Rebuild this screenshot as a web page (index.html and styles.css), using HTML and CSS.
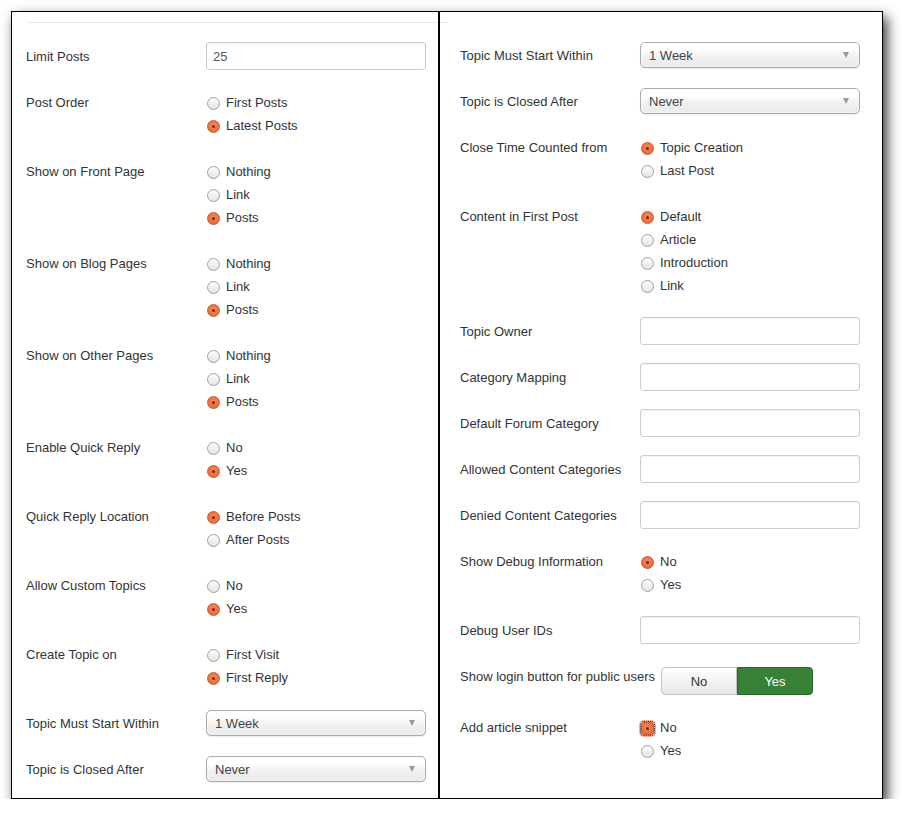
FILE: index.html
```html
<!DOCTYPE html>
<html>
<head>
<meta charset="utf-8">
<link rel="stylesheet" href="styles.css">
</head>
<body>
<div class="frame">
  <div class="panel left">
    <div class="rule"></div>
    <div class="group">
      <div class="label">Limit Posts</div>
      <div class="controls"><div class="input">25</div></div>
    </div>
    <div class="group">
      <div class="label">Post Order</div>
      <div class="controls radios">
        <div class="radio"><span class="dot"></span>First Posts</div>
        <div class="radio"><span class="dot on"></span>Latest Posts</div>
      </div>
    </div>
    <div class="group">
      <div class="label">Show on Front Page</div>
      <div class="controls radios">
        <div class="radio"><span class="dot"></span>Nothing</div>
        <div class="radio"><span class="dot"></span>Link</div>
        <div class="radio"><span class="dot on"></span>Posts</div>
      </div>
    </div>
    <div class="group">
      <div class="label">Show on Blog Pages</div>
      <div class="controls radios">
        <div class="radio"><span class="dot"></span>Nothing</div>
        <div class="radio"><span class="dot"></span>Link</div>
        <div class="radio"><span class="dot on"></span>Posts</div>
      </div>
    </div>
    <div class="group">
      <div class="label">Show on Other Pages</div>
      <div class="controls radios">
        <div class="radio"><span class="dot"></span>Nothing</div>
        <div class="radio"><span class="dot"></span>Link</div>
        <div class="radio"><span class="dot on"></span>Posts</div>
      </div>
    </div>
    <div class="group">
      <div class="label">Enable Quick Reply</div>
      <div class="controls radios">
        <div class="radio"><span class="dot"></span>No</div>
        <div class="radio"><span class="dot on"></span>Yes</div>
      </div>
    </div>
    <div class="group">
      <div class="label">Quick Reply Location</div>
      <div class="controls radios">
        <div class="radio"><span class="dot on"></span>Before Posts</div>
        <div class="radio"><span class="dot"></span>After Posts</div>
      </div>
    </div>
    <div class="group">
      <div class="label">Allow Custom Topics</div>
      <div class="controls radios">
        <div class="radio"><span class="dot"></span>No</div>
        <div class="radio"><span class="dot on"></span>Yes</div>
      </div>
    </div>
    <div class="group">
      <div class="label">Create Topic on</div>
      <div class="controls radios">
        <div class="radio"><span class="dot"></span>First Visit</div>
        <div class="radio"><span class="dot on"></span>First Reply</div>
      </div>
    </div>
    <div class="group">
      <div class="label">Topic Must Start Within</div>
      <div class="controls sel"><div class="select">1 Week<span class="caret"></span></div></div>
    </div>
    <div class="group last">
      <div class="label">Topic is Closed After</div>
      <div class="controls sel"><div class="select">Never<span class="caret"></span></div></div>
    </div>
  </div>
  <div class="panel right">
    <div class="rule stub"></div>
    <div class="group">
      <div class="label">Topic Must Start Within</div>
      <div class="controls sel"><div class="select">1 Week<span class="caret"></span></div></div>
    </div>
    <div class="group">
      <div class="label">Topic is Closed After</div>
      <div class="controls sel"><div class="select">Never<span class="caret"></span></div></div>
    </div>
    <div class="group">
      <div class="label">Close Time Counted from</div>
      <div class="controls radios">
        <div class="radio"><span class="dot on"></span>Topic Creation</div>
        <div class="radio"><span class="dot"></span>Last Post</div>
      </div>
    </div>
    <div class="group">
      <div class="label">Content in First Post</div>
      <div class="controls radios">
        <div class="radio"><span class="dot on"></span>Default</div>
        <div class="radio"><span class="dot"></span>Article</div>
        <div class="radio"><span class="dot"></span>Introduction</div>
        <div class="radio"><span class="dot"></span>Link</div>
      </div>
    </div>
    <div class="group">
      <div class="label">Topic Owner</div>
      <div class="controls"><div class="input"></div></div>
    </div>
    <div class="group">
      <div class="label">Category Mapping</div>
      <div class="controls"><div class="input"></div></div>
    </div>
    <div class="group">
      <div class="label">Default Forum Category</div>
      <div class="controls"><div class="input"></div></div>
    </div>
    <div class="group">
      <div class="label">Allowed Content Categories</div>
      <div class="controls"><div class="input"></div></div>
    </div>
    <div class="group">
      <div class="label">Denied Content Categories</div>
      <div class="controls"><div class="input"></div></div>
    </div>
    <div class="group">
      <div class="label">Show Debug Information</div>
      <div class="controls radios">
        <div class="radio"><span class="dot on"></span>No</div>
        <div class="radio"><span class="dot"></span>Yes</div>
      </div>
    </div>
    <div class="group">
      <div class="label">Debug User IDs</div>
      <div class="controls"><div class="input"></div></div>
    </div>
    <div class="group">
      <div class="label">Show login button for public users</div>
      <div class="controls btns">
        <div class="btn-group">
          <span class="btn">No</span><span class="btn yes">Yes</span>
        </div>
      </div>
    </div>
    <div class="group">
      <div class="label">Add article snippet</div>
      <div class="controls radios">
        <div class="radio"><span class="dot on focus"></span>No</div>
        <div class="radio"><span class="dot"></span>Yes</div>
      </div>
    </div>
  </div>
</div>
</body>
</html>
```

FILE: styles.css
```css
html, body {
  margin: 0;
  padding: 0;
  background: #fff;
}
body {
  font-family: "Liberation Sans", Arial, sans-serif;
  font-size: 13px;
  color: #333;
}
.frame {
  margin: 11px 0 0 11px;
  width: 870px;
  height: 786px;
  border: 1px solid #000;
  display: flex;
  background: #fff;
  box-shadow: 4px 6px 12px rgba(0, 0, 0, 0.8);
}
.panel {
  box-sizing: border-box;
}
.left {
  width: 426px;
  padding: 10px 12px 0 14px;
  position: relative;
}
.right {
  width: 444px;
  border-left: 2px solid #000;
  padding: 29px 22px 0 20px;
  position: relative;
}
.rule {
  height: 1px;
  background: #e9e9e9;
  margin: 0 -12px 19px 0;
}
.rule.stub {
  position: absolute;
  top: 10px;
  left: 0;
  width: 8px;
  margin: 0;
}
.group {
  display: flex;
  align-items: flex-start;
  margin-bottom: 18px;
}
.label {
  width: 180px;
  flex: none;
  padding-top: 6px;
  line-height: 18px;
  height: 18px;
  white-space: nowrap;
}
.controls {
  width: 220px;
  flex: none;
}
.input {
  box-sizing: border-box;
  height: 28px;
  border: 1px solid #ccc;
  border-radius: 3px;
  box-shadow: inset 0 1px 1px rgba(0, 0, 0, 0.06);
  padding: 5px 6px 0 6px;
  line-height: 18px;
  color: #555;
}
.sel {
  padding-top: 1px;
  padding-bottom: 1px;
}
.select {
  box-sizing: border-box;
  position: relative;
  height: 26px;
  border: 1px solid #aaa;
  border-radius: 5px;
  background: linear-gradient(#fff 0%, #fff 25%, #f0f0f0 60%, #eaeaea 100%);
  box-shadow: 0 1px 1px rgba(0, 0, 0, 0.08), inset 0 0 3px #fff;
  padding: 4px 8px 0 8px;
  line-height: 17px;
  color: #444;
}
.caret {
  position: absolute;
  right: 10px;
  top: 9px;
  width: 0;
  height: 0;
  border-left: 3.5px solid transparent;
  border-right: 3.5px solid transparent;
  border-top: 6px solid #999;
}
.radios {
  padding-bottom: 5px;
}
.radio {
  display: flex;
  align-items: center;
  height: 17px;
  padding-top: 6px;
  line-height: 18px;
}
.dot {
  box-sizing: border-box;
  width: 13px;
  height: 13px;
  margin: 1px 6px 0 1px;
  border-radius: 50%;
  border: 1px solid #a0a0a0;
  background: linear-gradient(#fdfdfd, #e4e4e4);
  position: relative;
  flex: none;
}
.dot.on {
  border-color: #c9592c;
  background: radial-gradient(circle at 50% 40%, #f4895a, #e2612f);
}
.dot.on::after {
  content: "";
  position: absolute;
  left: 4px;
  top: 4px;
  width: 3px;
  height: 3px;
  border-radius: 50%;
  background: #6e2a10;
}
.dot.focus {
  outline: 1px dotted #333;
  outline-offset: 0;
  border-radius: 3px;
  box-shadow: 0 0 0 2px #f6b08f;
  width: 13px;
  height: 13px;
}
.btns {
  padding-top: 5px;
  padding-left: 21px;
}
.btn-group {
  display: flex;
}
.btn {
  box-sizing: border-box;
  width: 76px;
  height: 28px;
  line-height: 27px;
  text-align: center;
  font-size: 13px;
  color: #333;
  border: 1px solid #c4c4c4;
  background: linear-gradient(#fff, #e6e6e6);
  border-radius: 4px 0 0 4px;
}
.btn.yes {
  background: #378137;
  border-color: #2b682b;
  color: #fff;
  border-radius: 0 4px 4px 0;
}
```
